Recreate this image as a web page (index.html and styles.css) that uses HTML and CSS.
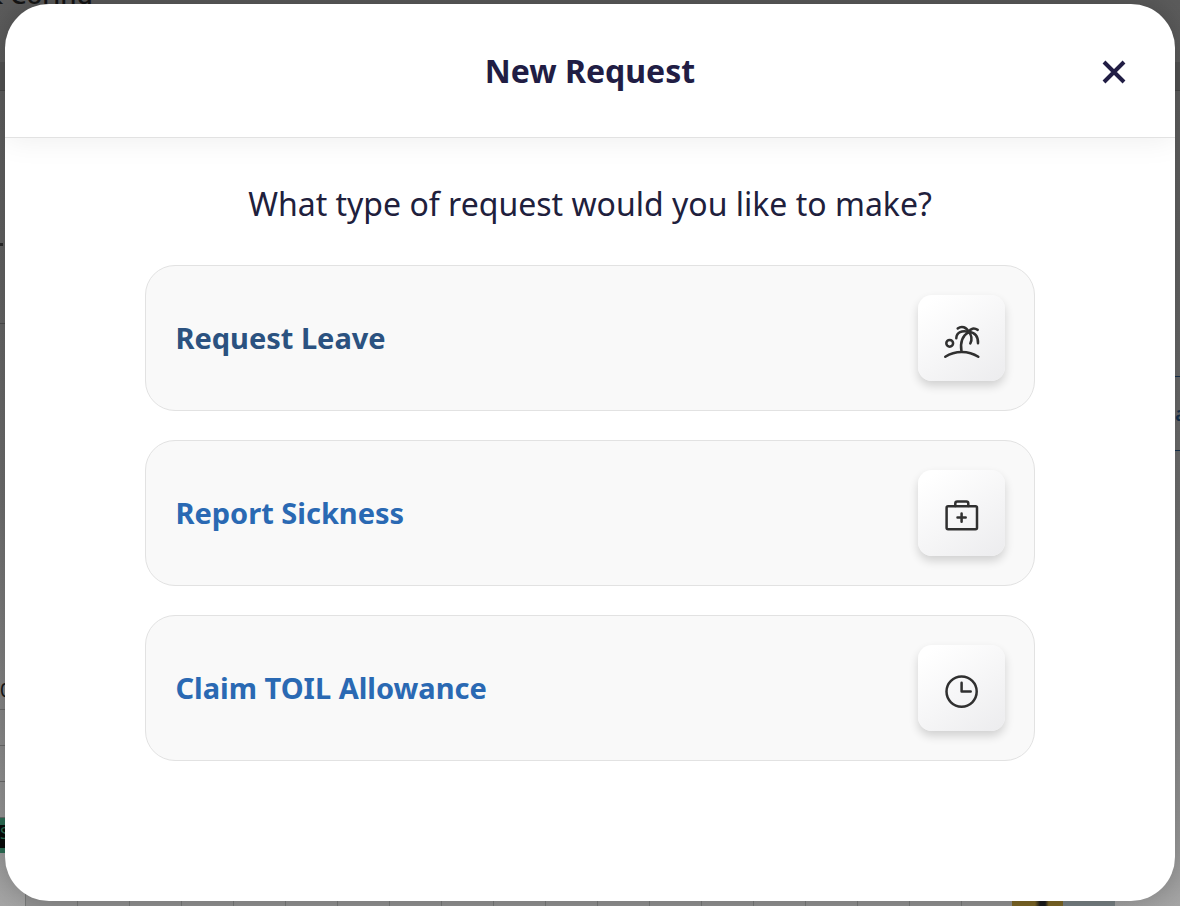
FILE: index.html
```html
<!DOCTYPE html>
<html lang="en">
<head>
    <meta charset="UTF-8">
    <meta name="viewport" content="width=device-width, initial-scale=1.0">
    <title>New Request</title>
    <link rel="stylesheet" href="styles.css">
</head>
<body>
    <!-- dimmed page behind the dialog -->
    <div class="backdrop" aria-hidden="true">
        <span class="page-title">&amp; Coring</span>
        <span class="band"></span>
        <span class="dash"></span>
        <span class="line"></span>
        <span class="outline">a</span>
        <span class="day">0</span>
        <span class="rows"></span>
        <span class="event">S</span>
        <span class="columns"></span>
        <span class="weekend"></span>
        <span class="pending"></span>
    </div>

    <main class="modal" role="dialog" aria-labelledby="modal-title">
        <header class="modal-header">
            <h1 id="modal-title">New Request</h1>
            <button class="close" type="button" aria-label="Close">
                <svg viewBox="0 0 26 26" width="26" height="26">
                    <path d="M3 4L23 24M23 4L3 24"/>
                </svg>
            </button>
        </header>

        <section class="modal-body">
            <h2>What type of request would you like to make?</h2>

            <div class="options">
                <button class="option active" type="button">
                    <span>Request Leave</span>
                    <span class="tile">
                        <svg viewBox="0 0 40 40" width="40" height="40">
                            <path d="M3.3 34.8C13 28.3 26.5 28.3 36.3 34.8"/>
                            <path d="M19.5 29.5C18 21 20 14 26.7 10"/>
                            <path d="M26.7 10C24.5 5 19.5 3.5 15.7 6.5"/>
                            <path d="M26.7 10C20 8 14.5 10.5 14.3 16.3"/>
                            <path d="M26.7 10C28.5 6.5 32 5.5 35.7 7.9"/>
                            <path d="M26.7 10C33 10 36.3 14.5 36 21.3"/>
                            <path d="M26.7 10C30 13.5 30 18 28.3 21.5"/>
                            <circle cx="7.7" cy="21.3" r="3.4"/>
                        </svg>
                    </span>
                </button>
                <button class="option" type="button">
                    <span>Report Sickness</span>
                    <span class="tile">
                        <svg viewBox="0 0 40 40" width="40" height="40">
                            <rect x="4.6" y="9.3" width="30.4" height="22.9" rx="1.5"/>
                            <path d="M13.3 9V6.5Q13.3 4.5 15.3 4.5H24.3Q26.3 4.5 26.3 6.5V9"/>
                            <path d="M19.6 16.5V24.7M15.5 20.6H23.7"/>
                        </svg>
                    </span>
                </button>
                <button class="option" type="button">
                    <span>Claim TOIL Allowance</span>
                    <span class="tile">
                        <svg viewBox="0 0 40 40" width="40" height="40">
                            <circle cx="19.6" cy="19.6" r="15.1"/>
                            <path d="M19.6 10.8V19.6H28.7"/>
                        </svg>
                    </span>
                </button>
            </div>
        </section>
    </main>
</body>
</html>
```

FILE: styles.css
```css
* {
    padding: 0;
    margin: 0;
    box-sizing: border-box;
    font-family: "Noto Sans", "Open Sans", sans-serif;
}

:root {
    --ink: #211d44;
    --link: #2a69b3;
    --link-dark: #2b5280;
    --card: #f9f9f9;
    --border: #e2e2e2;
}

body {
    min-height: 100vh;
    display: flex;
    padding: 4px 5px 5px;
    background: linear-gradient(#5c5c5c, #646464 30%, #707070 55%, #8a8a8a 80%, #a6a6a6);
    overflow: hidden;
}

.backdrop {
    position: absolute;
    inset: 0;
    overflow: hidden;
    color: #151515;
}

.backdrop span {
    position: absolute;
}

.backdrop .page-title {
    top: -22px;
    left: -16px;
    font-size: 26px;
    line-height: 32px;
    font-weight: 500;
}

.backdrop .band {
    top: 62px;
    width: 100%;
    height: 29px;
    background-color: #545454;
    border-bottom: 1px solid #484848;
}

.backdrop .dash {
    top: 243px;
    width: 3px;
    height: 3px;
    background-color: #292929;
}

.backdrop .line {
    top: 323px;
    width: 5px;
    height: 1px;
    background-color: #4e4e4e;
}

.backdrop .outline {
    top: 376px;
    right: 0;
    width: 5px;
    height: 75px;
    border-top: 1px solid #17324f;
    border-bottom: 1px solid #17324f;
    color: #17324f;
    font-size: 20px;
    line-height: 73px;
    font-weight: 600;
}

.backdrop .day {
    top: 674px;
    left: 0;
    font-size: 20px;
    line-height: 32px;
}

.backdrop .rows {
    top: 709px;
    width: 5px;
    height: 109px;
    background: repeating-linear-gradient(#6c6c6c 0 1px, transparent 1px 36px);
}

.backdrop .event {
    top: 818px;
    width: 5px;
    height: 35px;
    border: solid #2c6e55;
    border-width: 7px 0 5px;
    background-color: #080c0a;
    color: #2c6e55;
    font-size: 16px;
    line-height: 16px;
}

.backdrop .columns {
    bottom: 0;
    left: 25px;
    width: 987px;
    height: 17px;
    background: repeating-linear-gradient(90deg, #7a7c7b 0 1px, #949494 1px 52px);
}

.backdrop .weekend {
    bottom: 0;
    left: 1063px;
    width: 52px;
    height: 6px;
    background-color: #798285;
}

.backdrop .pending {
    bottom: 0;
    left: 1012px;
    width: 51px;
    height: 6px;
    background: linear-gradient(90deg, #7e6726 45%, #1c1c1c 55% 65%, #7e6726 72%);
}

.modal {
    position: relative;
    flex: 1;
    background-color: #ffffff;
    border-radius: 44px;
    box-shadow: 0 0 30px rgba(0, 0, 0, 0.25);
    overflow: hidden;
}

.modal-header {
    display: grid;
    grid-template-columns: 1fr auto 1fr;
    align-items: center;
    height: 134px;
    padding: 0 48px;
    border-bottom: 1px solid var(--border);
    box-shadow: 0 0 30px rgba(0, 0, 0, 0.08);
    color: var(--ink);
}

.modal-header h1 {
    grid-column: 2;
    font-size: 32px;
    line-height: 46px;
    font-weight: 700;
}

.close {
    display: flex;
    justify-self: end;
    background: none;
    border: none;
    cursor: pointer;
}

.close svg {
    stroke: var(--ink);
    stroke-width: 4;
}

.modal-body {
    padding: 43px 12% 48px;
}

.modal-body h2 {
    margin-bottom: 38px;
    color: #20203c;
    font-size: 32px;
    line-height: 46px;
    font-weight: 400;
    text-align: center;
}

.options {
    display: flex;
    flex-direction: column;
    gap: 29px;
}

.option {
    display: flex;
    justify-content: space-between;
    align-items: center;
    padding: 29px;
    background-color: var(--card);
    border: 1px solid var(--border);
    border-radius: 30px;
    color: var(--link);
    font-size: 29px;
    line-height: 40px;
    font-weight: 700;
    text-align: left;
    cursor: pointer;
}

.option.active,
.option:hover {
    color: var(--link-dark);
}

.tile {
    display: flex;
    justify-content: center;
    align-items: center;
    width: 87px;
    height: 86px;
    padding: 8px 0 0 1px;
    border-radius: 14px;
    background: linear-gradient(145deg, #ffffff 10%, #ececee);
    box-shadow: 0 5px 10px rgba(0, 0, 0, 0.16);
}

.tile svg {
    fill: none;
    stroke: #303030;
    stroke-width: 2.5;
    stroke-linecap: round;
    stroke-linejoin: round;
}
```
